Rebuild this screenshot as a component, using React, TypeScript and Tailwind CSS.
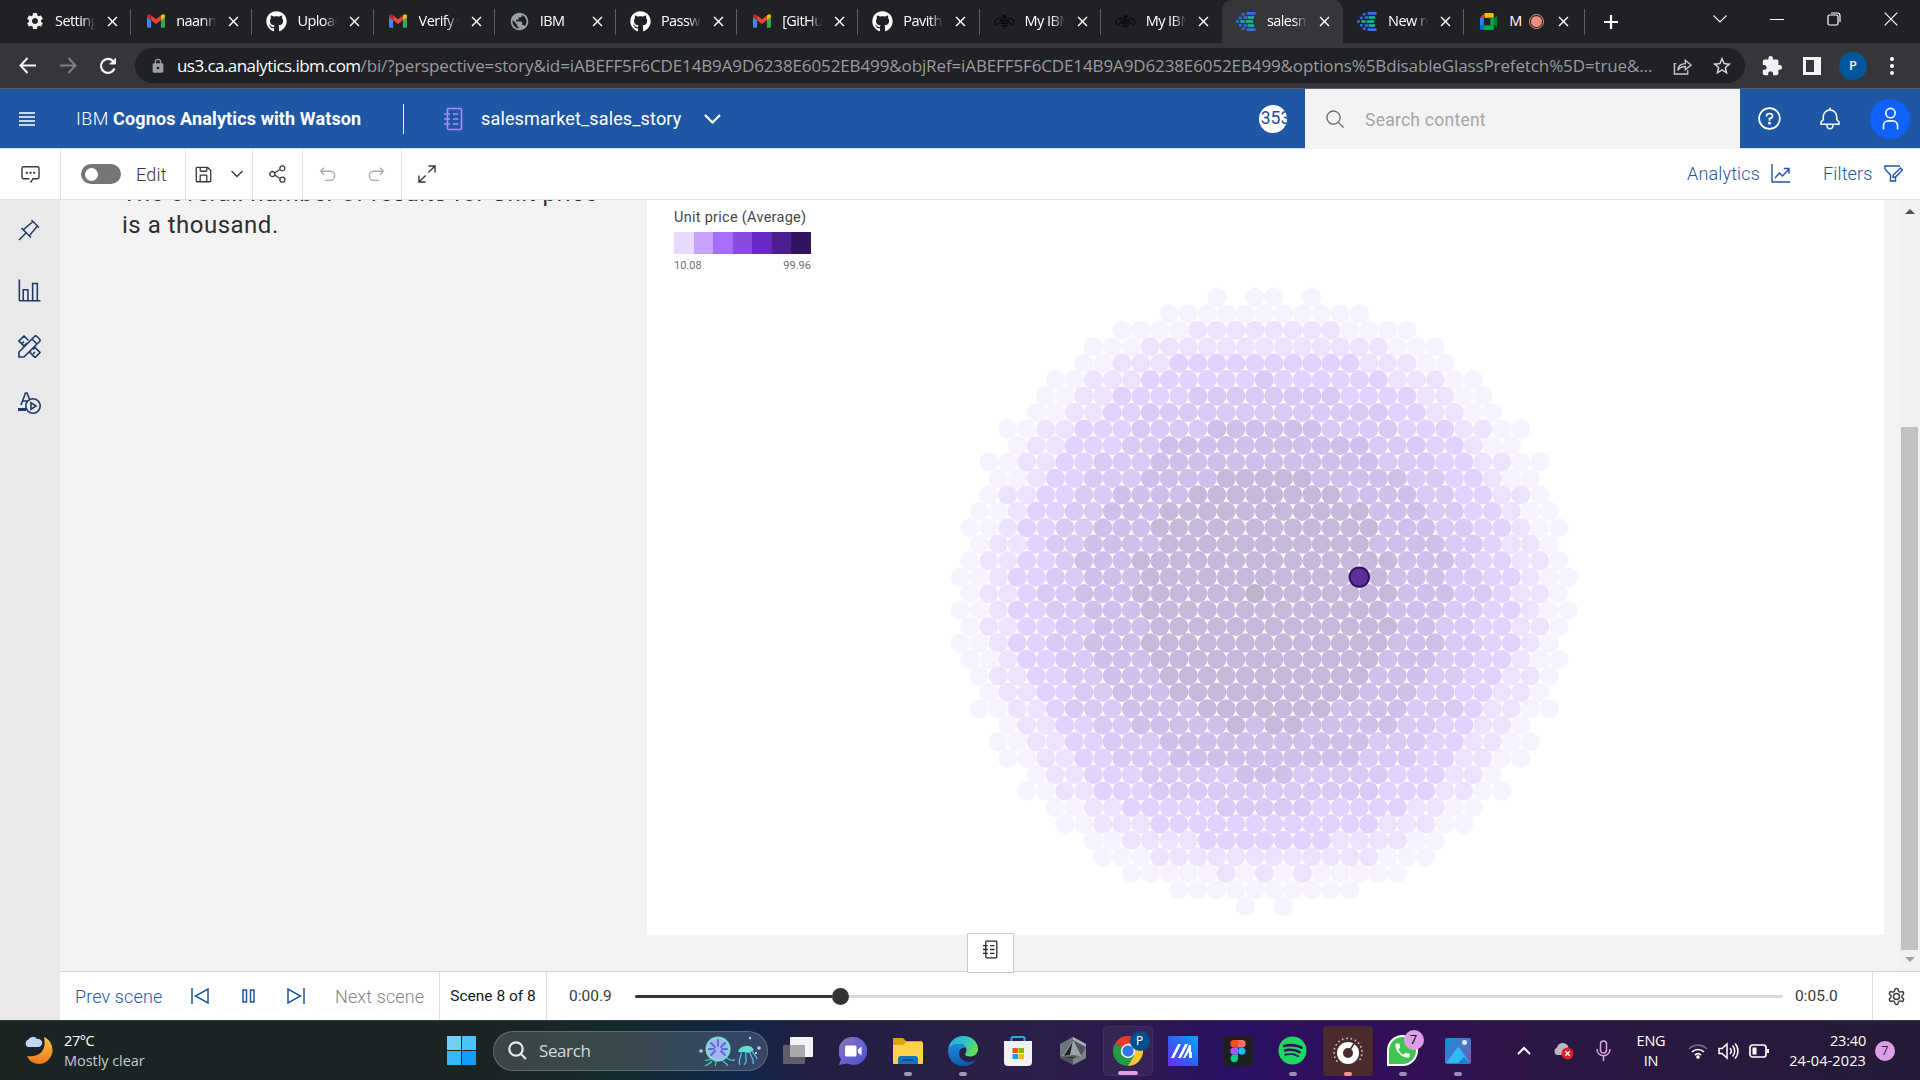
import React from "react";
import { FaGithub, FaSpotify } from "react-icons/fa6";
import { MdExtension, MdLock, MdPublic, MdSettings, MdStarBorder, MdClose } from "react-icons/md";

/* ---------- shared glyphs ---------- */

type IconProps = { className?: string };

const Glyph = ({ d, className }: { d: string; className: string }) => (
  <svg viewBox="0 0 32 32" className={className} fill="currentColor">
    <path d={d} />
  </svg>
);

const Line = ({
  className,
  children,
  box = "0 0 24 24",
  width = 1.5,
}: {
  className: string;
  children: React.ReactNode;
  box?: string;
  width?: number;
}) => (
  <svg viewBox={box} className={className} fill="none" stroke="currentColor" strokeWidth={width}>
    {children}
  </svg>
);

const PIN =
  "M28.5858,13.3137,30,11.9,20,2,18.6858,3.415l1.1858,1.1857L8.38,14.3225,6.6641,12.6067,5.25,14l5.6572,5.6773L2,28.5831,3.41,30l8.9111-8.9087L18,26.7482l1.3929-1.414L17.6765,23.618l9.724-11.4895ZM16.2624,22.2032,9.7966,15.7386,21.2907,6.0143,25.9859,10.71Z";
const BARS = "M27,28V6H19V28H15V14H7V28H4V2H2V28a2,2,0,0,0,2,2H30V28ZM13,28H9V16h4Zm12,0H21V8h4Z";
const SAVE =
  "M27.71,9.29l-5-5A1,1,0,0,0,22,4H6A2,2,0,0,0,4,6V26a2,2,0,0,0,2,2H26a2,2,0,0,0,2-2V10A1,1,0,0,0,27.71,9.29ZM12,6h8v4H12Zm8,20H12V18h8Zm2,0V18a2,2,0,0,0-2-2H12a2,2,0,0,0-2,2v8H6V6h4v4a2,2,0,0,0,2,2h8a2,2,0,0,0,2-2V6.41l4,4V26Z";
const SHARE =
  "M23,20a5,5,0,0,0-3.89,1.89L11.8,17.32a4.46,4.46,0,0,0,0-2.64l7.31-4.57A5,5,0,1,0,18,7a4.79,4.79,0,0,0,.2,1.32l-7.31,4.57a5,5,0,1,0,0,6.22l7.31,4.57A4.79,4.79,0,0,0,18,25a5,5,0,1,0,5-5ZM23,4a3,3,0,1,1-3,3A3,3,0,0,1,23,4ZM7,19a3,3,0,1,1,3-3A3,3,0,0,1,7,19Zm16,9a3,3,0,1,1,3-3A3,3,0,0,1,23,28Z";
const UNDO =
  "M20,10H7.8149l3.5874-3.5859L10,5,4,11,10,17l1.4023-1.4146L7.8179,12H20a6,6,0,0,1,0,12H12v2h8a8,8,0,0,0,0-16Z";
const BELL =
  "M28.7071,19.293,26,16.5859V13a10.0136,10.0136,0,0,0-9-9.9492V1H15V3.0508A10.0136,10.0136,0,0,0,6,13v3.5859L3.2929,19.293A1,1,0,0,0,3,20v3a1,1,0,0,0,1,1h7v.7768a5.152,5.152,0,0,0,4.5,5.1987A5.0057,5.0057,0,0,0,21,25V24h7a1,1,0,0,0,1-1V20A1,1,0,0,0,28.7071,19.293ZM19,25a3,3,0,0,1-6,0V24h6Zm8-3H5V20.4141L7.707,17.707A1,1,0,0,0,8,17V13a8,8,0,0,1,16,0v4a1,1,0,0,0,.293.707L27,20.4141Z";
const SEARCH =
  "M29,27.5859l-7.5521-7.5521a11.0177,11.0177,0,1,0-1.4141,1.4141L27.5859,29ZM4,13a9,9,0,1,1,9,9A9.01,9.01,0,0,1,4,13Z";
const USER =
  "M16,4a5,5,0,1,1-5,5,5,5,0,0,1,5-5m0-2a7,7,0,1,0,7,7A7,7,0,0,0,16,2Z M26,30H24V25a5,5,0,0,0-5-5H13a5,5,0,0,0-5,5v5H6V25a7,7,0,0,1,7-7h6a7,7,0,0,1,7,7Z";

const Notebook = ({ className }: IconProps) => (
  <Line className={className ?? ""} box="0 0 19 24" width={1.6}>
    <rect x="3.5" y="1.5" width="14" height="21" rx="1" />
    <path d="M0 7h6M0 12h6M0 17h6M9 7h5.500M9 12h5.500M9 17h5.500" />
  </Line>
);

/* ---------- browser tabs ---------- */

const Gmail = () => (
  <svg viewBox="0 0 24 18" className="h-[14px] w-[18px]">
    <path d="M0 3v13.500A1.500 1.500 0 0 0 1.500 18H5.500V8Z" fill="#4285f4" />
    <path d="M24 3v13.500a1.500 1.500 0 0 1-1.500 1.500H18.500V8Z" fill="#34a853" />
    <path d="M18.500 1.800V8L24 4V2.200C24 0 21.500-.8 19.800.6Z" fill="#fbbc04" />
    <path d="M5.500 8V1.800L12 6.600l6.500-4.800V8L12 13Z" fill="#ea4335" />
    <path d="M0 2.200V4l5.500 4V1.800L4.200.6C2.500-.8 0 0 0 2.200Z" fill="#c5221f" />
  </svg>
);

const Bee = () => (
  <svg viewBox="0 0 24 18" className="h-[15px] w-[21px]" fill="#0b0b0c">
    <circle cx="12" cy="3.500" r="2.500" />
    <path d="M8 7h8v2H8zM7.500 10h9v2h-9zM8 13h8v2H8zM10.500 15.500h3l-1.500 2.500z" />
    <path d="M8 6C3 3-.5 9 1 11.500S7 11 8 6ZM16 6c5-3 8.500 3 7 5.500S17 11 16 6Z" fill="none" stroke="#0b0b0c" strokeWidth="1.500" />
    <path d="M9 1 7.500 0M15 1l1.500-1" stroke="#0b0b0c" />
  </svg>
);

const CognosMark = () => (
  <svg viewBox="0 0 22 20" className="h-[19px] w-[21px]">
    <g fill="#2f6fe8">
      <path d="M11 0h9.500v3H11zM6 1h3v2.600H6zM8 4.400h4v2.600H8zM0 8.600h3v2.600H0zM3 5h3v2.600H3zM3 12.600h3v2.600H3zM8 13h4v2.600H8zM11 17h9.500v3H11zM6 16.400h3V19H6z" />
    </g>
    <g fill="#0cbfa0">
      <path d="M12.500 4.400H19v2.600h-6.500zM4.500 8.600H9v2.600H4.500zM10 8.600h8v2.600h-8zM12.500 13H19v2.600h-6.500z" />
    </g>
  </svg>
);

const Meet = () => (
  <svg viewBox="0 0 20 20" className="size-[19px]">
    <path d="M1 6 6 1v5Z" fill="#ea4335" />
    <path d="M6 1h8a1.500 1.500 0 0 1 1.500 1.500V6H6Z" fill="#fbbc04" />
    <path d="M1 6h4v8H1Z" fill="#2684fc" />
    <path d="M1 14h4v5H2.500A1.500 1.500 0 0 1 1 17.500Z" fill="#0066da" />
    <path d="M5 14h10.500v3.500A1.500 1.500 0 0 1 14 19H5Z" fill="#00ac47" />
    <path d="M12 10l7-6v12Z" fill="#00832d" />
    <path d="M12 6h3.500v8H12Z" fill="#00ac47" />
  </svg>
);

const tabs: { icon: React.ReactNode; label: string; active?: boolean; noLine?: boolean; rec?: boolean }[] = [
  { icon: <MdSettings className="size-[20px] text-[#f1f1f1]" />, label: "Settings" },
  { icon: <Gmail />, label: "naanmu" },
  { icon: <FaGithub className="size-[21px] text-white" />, label: "Upload" },
  { icon: <Gmail />, label: "Verify y" },
  { icon: <MdPublic className="size-[21px] text-[#9aa0a6]" />, label: "IBM" },
  { icon: <FaGithub className="size-[21px] text-white" />, label: "Passwo" },
  { icon: <Gmail />, label: "[GitHub" },
  { icon: <FaGithub className="size-[21px] text-white" />, label: "Pavithr" },
  { icon: <Bee />, label: "My IBM" },
  { icon: <Bee />, label: "My IBM", noLine: true },
  { icon: <CognosMark />, label: "salesma", active: true, noLine: true },
  { icon: <CognosMark />, label: "New re" },
  { icon: <Meet />, label: "M", rec: true },
];

const TabStrip = () => (
  <div className="flex h-[43px] items-stretch bg-[#202124] pl-[10px] font-['Open_Sans',sans-serif] text-[14.500px] text-white">
    {tabs.map((t, i) => (
      <div
        key={i}
        className={
          "relative flex w-[121.200px] shrink-0 items-center pb-[1px] " +
          (t.active ? "rounded-t-[10px] bg-[#35363a]" : "")
        }
      >
        <div className="flex w-[45px] justify-center pl-[4px]">{t.icon}</div>
        <div
          className={
            "overflow-hidden whitespace-nowrap " +
            (t.rec
              ? "w-[17px]"
              : "w-[41px] tracking-[-0.550px] [mask-image:linear-gradient(to_right,black_65%,transparent_98%)]")
          }
        >
          {t.label}
        </div>
        {t.rec && (
          <div className="ml-[3px] flex size-[15px] items-center justify-center rounded-full border border-[#f28b82]">
            <div className="size-[11px] rounded-full bg-[#f28b82]" />
          </div>
        )}
        <MdClose className={"size-[17px] " + (t.rec ? "ml-[11px]" : "ml-[8px]")} />
        {!t.noLine && <div className="absolute top-[9px] right-0 h-[26px] w-px bg-[#5b5d60]" />}
      </div>
    ))}
    <div className="flex w-[52px] items-center justify-center">
      <Line className="size-[16px]" box="0 0 16 16" width={2.2}>
        <path d="M8 1v14M1 8h14" />
      </Line>
    </div>
    <div className="ml-auto flex items-center pr-[1px] pb-[5px]">
      <div className="flex w-[57px] justify-center">
        <Line className="h-[8px] w-[14px]" box="0 0 14 8" width={1.1}>
          <path d="m.5.5 6.500 6.500 6.500-6.500" />
        </Line>
      </div>
      <div className="flex w-[57px] justify-center">
        <div className="h-px w-[14px] bg-white" />
      </div>
      <div className="flex w-[57px] justify-center">
        <Line className="size-[14px]" box="0 0 14 14" width={1.2}>
          <rect x="1" y="3" width="10" height="10" rx="1.500" />
          <path d="M4 1h6.500A2.500 2.500 0 0 1 13 3.500V10" />
        </Line>
      </div>
      <div className="flex w-[57px] justify-center">
        <Line className="size-[14px]" box="0 0 14 14" width={1.2}>
          <path d="m.7.700 12.600 12.600M13.300.7.700 13.300" />
        </Line>
      </div>
    </div>
  </div>
);

const AddressBar = () => (
  <div className="flex h-[46px] items-center border-b border-[#5e5f61] bg-[#35363a] text-[#f1f3f4]">
    <div className="flex w-[48px] justify-center pl-[6px]">
      <Line className="size-[17px]" box="0 0 17 17" width={2}>
        <path d="M8.500 1 1.500 8.500l7 7.500M1.500 8.500H17" />
      </Line>
    </div>
    <div className="flex w-[40px] justify-center text-[#7d7e81]">
      <Line className="size-[17px]" box="0 0 17 17" width={2}>
        <path d="m8.500 1 7 7.500-7 7.500M15.500 8.500H0" />
      </Line>
    </div>
    <div className="flex w-[40px] justify-center">
      <Line className="size-[18px]" box="0 0 18 18" width={2.2}>
        <path d="M15.500 11.500A7 7 0 1 1 14 4l2 2" />
        <path d="M16.500 1v6h-6" fill="currentColor" strokeWidth="1" />
      </Line>
    </div>
    <div className="ml-[7px] flex h-[35px] w-[1610px] items-center rounded-full bg-[#202124]">
      <MdLock className="ml-[15px] size-[16px] text-[#9aa0a6]" />
      <div className="ml-[11px] w-[1482px] overflow-hidden font-['Open_Sans',sans-serif] text-[17px] whitespace-nowrap text-[#999b9e]">
        <span className="tracking-[-0.560px] text-white">us3.ca.analytics.ibm.com</span>
        <span className="tracking-[-0.120px]">
          /bi/?perspective=story&amp;id=iABEFF5F6CDE14B9A9D6238E6052EB499&amp;objRef=iABEFF5F6CDE14B9A9D6238E6052EB499&amp;options%5BdisableGlassPrefetch%5D=true&amp;...
        </span>
      </div>
      <Line className="ml-[14px] size-[19px] text-[#c4c7c5]" box="0 0 20 20" width={1.500}>
        <path d="M3.500 8H1.500v11h14v-4M5 15c.5-5 3-7 8-7V4.500l6 5-6 5V11c-4 0-6 1-8 4Z" />
      </Line>
      <MdStarBorder className="ml-[19px] size-[22px] text-[#d5d7d9]" />
    </div>
    <MdExtension className="ml-[16px] size-[22px]" />
    <div className="ml-[20px] h-[18px] w-[18px] border-[3px] border-r-[7px] border-[#f1f3f4]" />
    <div className="ml-[18px] flex size-[28px] items-center justify-center rounded-full bg-[#00579b] font-['Open_Sans',sans-serif] text-[13px] font-semibold">
      P
    </div>
    <div className="ml-[23px] flex flex-col gap-[3px]">
      <div className="size-[4px] rounded-full bg-white" />
      <div className="size-[4px] rounded-full bg-white" />
      <div className="size-[4px] rounded-full bg-white" />
    </div>
  </div>
);

/* ---------- application header ---------- */

const AppHeader = () => (
  <header className="flex h-[60px] items-center border-b border-[#d5e0ee] bg-[#1f57a4] text-white">
    <Line className="ml-[19px] h-[14px] w-[16px]" box="0 0 16 14" width={1.3}>
      <path d="M0 1h16M0 5h16M0 9h16M0 13h16" />
    </Line>
    <div className="ml-[41px] w-[286px] text-[18px] whitespace-nowrap">
      <span className="font-light tracking-[0.400px]">IBM</span>{" "}
      <span className="font-bold tracking-[0.120px]">Cognos Analytics with Watson</span>
    </div>
    <div className="ml-[41px] h-[30px] w-px bg-[#e8eef6]" />
    <Notebook className="ml-[40px] h-[24px] w-[19px] text-[#a98bff]" />
    <div className="ml-[18px] w-[200px] text-[18px] tracking-[0.150px] whitespace-nowrap">salesmarket_sales_story</div>
    <Line className="ml-[23px] h-[10px] w-[17px]" box="0 0 17 10" width={2.2}>
      <path d="m1 1 7.500 7.500L16 1" />
    </Line>
    <div className="ml-auto flex items-center self-stretch">
      <div className="flex size-[28px] items-center justify-center overflow-hidden rounded-full bg-white text-[17.500px] text-[#1f4f9a]">
        <span className="ml-[5px]">353</span>
      </div>
      <div className="ml-[18px] flex h-[60px] w-[435px] items-center self-start bg-[#f3f3f3] pl-[20px]">
        <Glyph d={SEARCH} className="size-[21px] text-[#6f6f6f]" />
        <span className="mt-[2px] ml-[19px] text-[17.500px] tracking-[0.250px] text-[#a5a5a5]">Search content</span>
      </div>
      <div className="flex w-[60px] justify-center pr-[2px]">
        <Line className="size-[23px]" box="0 0 23 23" width={1.7}>
          <circle cx="11.500" cy="11.500" r="10.400" />
          <path d="M8.500 9.500V9c0-1.700 1.200-2.500 3-2.500s3 1 3 2.500-1.300 2.400-3 2.600v2.200" />
          <circle cx="11.500" cy="16.300" r=".6" fill="currentColor" />
        </Line>
      </div>
      <div className="flex w-[60px] justify-center">
        <Glyph d={BELL} className="size-[24px]" />
      </div>
      <div className="mr-[10px] ml-[10px] flex size-[40px] items-center justify-center rounded-full bg-[#0f62fe]">
        <Glyph d={USER} className="size-[25px]" />
      </div>
    </div>
  </header>
);

const ToolBar = () => (
  <div className="flex h-[51px] items-stretch border-b border-[#e4e4e4] bg-white text-[#393939]">
    <div className="flex w-[61px] items-center justify-center border-r border-[#e4e4e4]">
      <Line className="size-[19px]" box="0 0 19 19" width={1.4}>
        <path d="M9.500 17.500 12 13.800h4.500A1.500 1.500 0 0 0 18 12.300V3.200a1.500 1.500 0 0 0-1.500-1.500h-14A1.500 1.500 0 0 0 1 3.200v9.100a1.500 1.500 0 0 0 1.500 1.500H8.500" />
        <path d="M4.800 7.800h2M8.500 7.800h2M12.200 7.800h2" strokeWidth="2" />
      </Line>
    </div>
    <div className="flex w-[125px] items-center border-r border-[#e4e4e4] pl-[20px]">
      <div className="flex h-[20px] w-[40px] items-center rounded-full bg-[#757575] pl-[4px]">
        <div className="size-[13px] rounded-full bg-white" />
      </div>
      <span className="ml-[15px] text-[18px] font-light tracking-[0.200px]">Edit</span>
    </div>
    <div className="flex w-[67px] items-center border-r border-[#e4e4e4] pl-[7px]">
      <Glyph d={SAVE} className="size-[21px]" />
      <Line className="ml-[16px] h-[8px] w-[14px]" box="0 0 13 8" width={1.4}>
        <path d="m1 1 5.500 5.500L12 1" />
      </Line>
    </div>
    <div className="flex w-[50px] items-center justify-center border-r border-[#e4e4e4]">
      <Glyph d={SHARE} className="size-[20px]" />
    </div>
    <div className="flex w-[99px] items-center border-r border-[#e4e4e4] pl-[14px] text-[#a8a8a8]">
      <Glyph d={UNDO} className="size-[21px]" />
      <Glyph d={UNDO} className="ml-[28px] size-[21px] -scale-x-100" />
    </div>
    <div className="flex w-[50px] items-center justify-center">
      <Line className="size-[18px]" box="0 0 19 19" width={1.5}>
        <path d="M11 1h7v7M18 1l-7 7M8 18H1v-7M1 18l7-7" />
      </Line>
    </div>
    <div className="ml-auto flex items-center pr-[17px] pb-[1px] text-[18px] font-light text-[#1f57a4]">
      <span className="w-[73px] tracking-[0.150px]">Analytics</span>
      <Line className="ml-[11px] size-[19px]" box="0 0 19 19" width={1.4}>
        <path d="M1 0v18h18M4 14l4.500-5 3 3L18 5M13 4.500h5v5" />
      </Line>
      <span className="ml-[33px] w-[50px] tracking-[0.150px]">Filters</span>
      <Line className="ml-[11px] size-[19px]" box="0 0 19 19" width={1.4}>
        <path d="M13 2H1v3l5.500 6v6h5v-4.500" />
        <path d="M9 11.500 16.500 4l2 2L11.500 13 9 13.500ZM13 2h3" />
      </Line>
    </div>
  </div>
);

const SideRail = () => (
  <nav className="flex w-[60px] shrink-0 flex-col items-center bg-[#e9e9e9] pt-[18px] pr-[2px] text-[#1f3a69]">
    <Glyph d={PIN} className="size-[24px]" />
    <Glyph d={BARS} className="mt-[36px] size-[25px]" />
    <Line className="mt-[32px] size-[23px]" box="0 0 23 23" width={1.6}>
      <path d="m1 22v-5L16.500 1.500a1.800 1.800 0 0 1 2.500 0L21.500 4a1.800 1.800 0 0 1 0 2.500L6 22ZM14 4l5 5" />
      <path d="m9 8-3 3-5-5L6 1l4.500 4.500M4 8.500 6 6.500M15 14.500l2-2 5 5-5 5-5-5 1-1M15 19l2-2" />
    </Line>
    <Line className="mt-[33px] size-[23px]" box="0 0 23 23" width={1.6}>
      <path d="m3 14 4.500-12h1.500l2.500 6M5 10h4" />
      <path d="M0 18.500h8" strokeWidth="3" />
      <circle cx="15" cy="15" r="7.200" />
      <path d="M13 11.800v6.400l5-3.200Z" />
    </Line>
  </nav>
);

/* ---------- honeycomb chart ---------- */

const PITCH = 19;
const ORIGIN_X = 1254.8 - 647;
const ORIGIN_Y = 297.4 - 200;
const shades = ["#f6f2ff", "#ede3ff", "#e3d2ff", "#dac9f5", "#d0beeb", "#c7b9dc", "#beb4c8"];

/* Every row lists [half-column, shade] pairs where a run begins; the last number is the final half-column. */
const rows: { runs: [number, number][]; end: number }[] = [
  { runs: [[-4, 0], [-2, -1], [0, 0], [4, -1], [6, 0]], end: 6 },
  { runs: [[-9, 0]], end: 11 },
  { runs: [[-14, 0], [-6, 1], [10, 0]], end: 16 },
  { runs: [[-17, 0], [-11, 1], [15, 0]], end: 19 },
  { runs: [[-18, 0], [-14, 1], [-8, 2], [12, 1], [18, 0]], end: 20 },
  { runs: [[-21, 0], [-17, 1], [-11, 2], [1, 3], [3, 2], [15, 1], [21, 0]], end: 23 },
  { runs: [[-22, 0], [-18, 1], [-14, 2], [-6, 3], [10, 2], [18, 1], [22, 0]], end: 24 },
  { runs: [[-23, 0], [-19, 1], [-15, 2], [-11, 3], [15, 2], [19, 1], [23, 0]], end: 25 },
  { runs: [[-26, 0], [-22, 1], [-18, 2], [-12, 3], [-4, 4], [8, 3], [16, 2], [22, 1], [26, 0]], end: 28 },
  { runs: [[-25, 0], [-23, 1], [-19, 2], [-13, 3], [-9, 4], [13, 3], [19, 2], [23, 1], [25, 0]], end: 27 },
  { runs: [[-28, 0], [-24, 1], [-20, 2], [-16, 3], [-10, 4], [14, 3], [20, 2], [24, 1], [28, 0]], end: 30 },
  { runs: [[-27, 0], [-23, 1], [-21, 2], [-17, 3], [-11, 4], [-3, 5], [7, 4], [17, 3], [21, 2], [25, 1], [27, 0]], end: 29 },
  { runs: [[-28, 0], [-26, 1], [-22, 2], [-18, 3], [-14, 4], [-6, 5], [10, 4], [18, 3], [22, 2], [26, 1], [30, 0]], end: 30 },
  { runs: [[-29, 0], [-25, 1], [-23, 2], [-19, 3], [-15, 4], [-9, 5], [13, 4], [19, 3], [23, 2], [27, 1], [29, 0]], end: 31 },
  { runs: [[-30, 0], [-26, 1], [-24, 2], [-20, 3], [-16, 4], [-10, 5], [14, 4], [20, 3], [24, 2], [28, 1], [30, 0]], end: 32 },
  { runs: [[-29, 0], [-27, 1], [-23, 2], [-21, 3], [-17, 4], [-9, 5], [13, 4], [21, 3], [25, 2], [27, 1], [31, 0]], end: 31 },
  { runs: [[-30, 0], [-28, 1], [-24, 2], [-20, 3], [-18, 4], [-12, 5], [16, 4], [22, 3], [24, 2], [28, 1], [32, 0]], end: 32 },
  { runs: [[-31, 0], [-27, 1], [-25, 2], [-21, 3], [-17, 4], [-11, 5], [15, 4], [21, 3], [25, 2], [29, 1], [31, 0]], end: 33 },
  { runs: [[-30, 0], [-28, 1], [-24, 2], [-22, 3], [-18, 4], [-12, 5], [0, 6], [2, 5], [16, 4], [22, 3], [26, 2], [28, 1], [32, 0]], end: 32 },
  { runs: [[-31, 0], [-27, 1], [-25, 2], [-21, 3], [-17, 4], [-11, 5], [15, 4], [21, 3], [25, 2], [29, 1], [31, 0]], end: 33 },
  { runs: [[-30, 0], [-28, 1], [-24, 2], [-20, 3], [-16, 4], [-10, 5], [16, 4], [20, 3], [24, 2], [28, 1], [32, 0]], end: 32 },
  { runs: [[-31, 0], [-27, 1], [-25, 2], [-21, 3], [-17, 4], [-11, 5], [15, 4], [21, 3], [25, 2], [29, 1], [31, 0]], end: 31 },
  { runs: [[-30, 0], [-26, 1], [-24, 2], [-20, 3], [-16, 4], [-10, 5], [14, 4], [20, 3], [24, 2], [28, 1], [30, 0]], end: 32 },
  { runs: [[-29, 0], [-27, 1], [-23, 2], [-19, 3], [-15, 4], [-9, 5], [13, 4], [19, 3], [23, 2], [27, 1], [31, 0]], end: 31 },
  { runs: [[-28, 0], [-26, 1], [-22, 2], [-18, 3], [-14, 4], [-8, 5], [12, 4], [18, 3], [22, 2], [26, 1], [30, 0]], end: 30 },
  { runs: [[-29, 0], [-25, 1], [-21, 2], [-19, 3], [-13, 4], [-5, 5], [9, 4], [17, 3], [23, 2], [25, 1], [29, 0]], end: 31 },
  { runs: [[-26, 0], [-24, 1], [-20, 2], [-16, 3], [-12, 4], [-2, 5], [0, 4], [2, 5], [6, 4], [16, 3], [20, 2], [24, 1], [28, 0]], end: 28 },
  { runs: [[-27, 0], [-23, 1], [-19, 2], [-15, 3], [-9, 4], [13, 3], [19, 2], [23, 1], [27, 0]], end: 29 },
  { runs: [[-26, 0], [-22, 1], [-18, 2], [-14, 3], [-8, 4], [12, 3], [18, 2], [22, 1], [26, 0]], end: 28 },
  { runs: [[-23, 0], [-21, 1], [-17, 2], [-11, 3], [-1, 4], [5, 3], [15, 2], [21, 1], [25, 0]], end: 25 },
  { runs: [[-24, 0], [-20, 1], [-16, 2], [-10, 3], [14, 2], [20, 1], [24, 0]], end: 26 },
  { runs: [[-21, 0], [-17, 1], [-13, 2], [-3, 3], [7, 2], [17, 1], [21, 0]], end: 23 },
  { runs: [[-20, 0], [-16, 1], [-10, 2], [14, 1], [20, 0]], end: 22 },
  { runs: [[-17, 0], [-13, 1], [-5, 2], [9, 1], [17, 0]], end: 19 },
  { runs: [[-16, 0], [-10, 1], [14, 0]], end: 18 },
  { runs: [[-13, 0], [-3, 1], [-1, 0], [1, 1], [3, 0], [5, 1], [7, 0]], end: 15 },
  { runs: [[-8, 0]], end: 10 },
  { runs: [[-1, 0], [1, -1], [3, 0]], end: 3 },
];

const dots = rows.flatMap(({ runs, end }, row) => {
  const out: { x: number; y: number; fill: string }[] = [];
  runs.forEach(([from, shade], i) => {
    if (shade < 0) return;
    const to = i + 1 < runs.length ? runs[i + 1][0] - 2 : end;
    for (let u = from; u <= to; u += 2) {
      out.push({ x: ORIGIN_X + (u * PITCH) / 2, y: ORIGIN_Y + row * 16.454, fill: shades[shade] });
    }
  });
  return out;
});

const PackedChart = () => (
  <svg width="1237" height="735" viewBox="0 0 1237 735" className="absolute inset-0">
    {dots.map((d, i) => (
      <circle key={i} cx={d.x} cy={d.y} r="9.600" fill={d.fill} />
    ))}
    <circle cx={ORIGIN_X + 11 * 9.5} cy={ORIGIN_Y + 17 * 16.454} r="9.700" fill="#5d2f9b" stroke="#31135e" strokeWidth="2" />
  </svg>
);

const Legend = () => (
  <div className="relative pt-[7px] pl-[27px]">
    <div className="text-[14.500px] leading-[22px] tracking-[0.280px] text-[#474747]">Unit price (Average)</div>
    <div className="mt-[3px] flex h-[22px] w-[137px]">
      <div className="flex-1 bg-[#e8daff]" />
      <div className="flex-1 bg-[#c5a3ff]" />
      <div className="flex-1 bg-[#a56eff]" />
      <div className="flex-1 bg-[#8a4be0]" />
      <div className="flex-1 bg-[#6929c4]" />
      <div className="flex-1 bg-[#4b1d8f]" />
      <div className="flex-1 bg-[#31135e]" />
    </div>
    <div className="mt-[5px] flex w-[137px] justify-between text-[11px] leading-[14px] text-[#6f6f6f]">
      <span>10.08</span>
      <span>99.96</span>
    </div>
  </div>
);

const Story = () => (
  <main className="relative flex h-[771px] bg-[#f3f3f3]">
    <div className="w-[587px] overflow-hidden pl-[62px]">
      <p className="mt-[-23px] text-[24px] leading-[32px] tracking-[0.500px] whitespace-nowrap text-[#2e2e2e]">
        The overall number of results for Unit price
        <br />
        is a thousand.
      </p>
    </div>
    <div className="relative h-[735px] w-[1237px] bg-white">
      <PackedChart />
      <Legend />
    </div>
    <div className="ml-auto flex w-[21px] flex-col items-center bg-[#f1f1f1]">
      <div className="mt-[9px] border-x-[5px] border-b-[5px] border-x-transparent border-b-[#505050]" />
      <div className="mt-[213px] h-[523px] w-[17px] bg-[#c1c1c1]" />
      <div className="mt-[7px] border-x-[5px] border-t-[5px] border-x-transparent border-t-[#a0a0a0]" />
    </div>
    <div className="absolute top-[733px] left-[907px] z-10 flex h-[40px] w-[47px] justify-center border border-[#c9c9c9] bg-white pt-[6px]">
      <Notebook className="h-[19px] w-[15px] text-[#262626]" />
    </div>
  </main>
);

const Player = () => (
  <div className="flex h-[49px] items-stretch border-t border-[#d4d4d4] bg-white text-[18px] font-light whitespace-nowrap text-[#1f57a4]">
    <div className="flex w-[380px] items-center border-r border-[#dcdcdc] pl-[15px]">
      <span className="w-[88px] tracking-[0.120px]">Prev scene</span>
      <Line className="ml-[28px] h-[16px] w-[18px]" box="0 0 18 16" width={1.5}>
        <path d="M1 0v16M17 1v14L4.500 8Z" />
      </Line>
      <Line className="ml-[33px] h-[14px] w-[13px]" box="0 0 13 14" width={1.5}>
        <path d="M1 1h3.500v12H1zM8.500 1H12v12H8.500z" />
      </Line>
      <Line className="ml-[32px] h-[16px] w-[18px]" box="0 0 18 16" width={1.5}>
        <path d="M17 0v16M1 1v14L13.500 8Z" />
      </Line>
      <span className="ml-[30px] tracking-[0.120px] text-[#858585]">Next scene</span>
    </div>
    <div className="flex w-[107px] items-center justify-center border-r border-[#dcdcdc] pt-[2px] text-[15.500px] font-normal text-[#161616]">
      Scene 8 of 8
    </div>
    <div className="flex flex-1 items-center text-[15.500px] text-[#393939]">
      <span className="mt-[2px] ml-[22px] w-[44px] font-normal">0:00.9</span>
      <div className="ml-[22px] flex h-[17px] w-[1148px] items-center">
        <div className="h-[3px] w-[197px] rounded-l bg-[#333]" />
        <div className="size-[17px] rounded-full bg-[#333]" />
        <div className="h-[3px] flex-1 rounded-r bg-[#dadada]" />
      </div>
      <span className="mt-[2px] ml-[12px] font-normal">0:05.0</span>
    </div>
    <div className="flex w-[48px] items-center justify-center border-l border-[#dcdcdc] pr-[1px] text-[#393939]">
      <Line className="size-[19px]" width={1.8}>
        <path d="M12.220 2h-.44a2 2 0 0 0-2 2v.18a2 2 0 0 1-1 1.730l-.43.25a2 2 0 0 1-2 0l-.15-.08a2 2 0 0 0-2.730.73l-.22.38a2 2 0 0 0 .73 2.730l.15.1a2 2 0 0 1 1 1.720v.51a2 2 0 0 1-1 1.740l-.15.09a2 2 0 0 0-.73 2.730l.22.38a2 2 0 0 0 2.730.73l.15-.08a2 2 0 0 1 2 0l.43.25a2 2 0 0 1 1 1.730V20a2 2 0 0 0 2 2h.44a2 2 0 0 0 2-2v-.18a2 2 0 0 1 1-1.730l.43-.25a2 2 0 0 1 2 0l.15.08a2 2 0 0 0 2.730-.73l.22-.39a2 2 0 0 0-.73-2.730l-.15-.08a2 2 0 0 1-1-1.740v-.5a2 2 0 0 1 1-1.740l.15-.09a2 2 0 0 0 .73-2.730l-.22-.38a2 2 0 0 0-2.730-.73l-.15.08a2 2 0 0 1-2 0l-.43-.25a2 2 0 0 1-1-1.730V4a2 2 0 0 0-2-2z" />
        <circle cx="12" cy="12" r="3.800" />
      </Line>
    </div>
  </div>
);

/* ---------- taskbar ---------- */

const TaskView = () => (
  <svg viewBox="0 0 30 28" className="h-[28px] w-[30px]">
    <rect x="0" y="8" width="22" height="19" rx="1" fill="#605e66" />
    <rect x="7" y="0" width="23" height="20" rx="1" fill="#f4f4f5" />
    <path d="M7 8h15v12H7z" fill="#a9a8ac" />
  </svg>
);
const Chat = () => (
  <svg viewBox="0 0 28 28" className="size-[28px]">
    <defs>
      <linearGradient id="chat" x1="0" y1="0" x2="1" y2="1">
        <stop offset="0" stopColor="#8f74a8" />
        <stop offset=".5" stopColor="#6a63d2" />
        <stop offset="1" stopColor="#4a50c4" />
      </linearGradient>
    </defs>
    <path d="M14 0a14 14 0 1 1-6 26.500L0 28l2-6A14 14 0 0 1 14 0Z" fill="url(#chat)" />
    <rect x="6" y="8.500" width="11.500" height="11" rx="1.500" fill="#fff" />
    <path d="m19 12.500 3.500-3v9l-3.500-3Z" fill="#fff" />
  </svg>
);
const Folder = () => (
  <svg viewBox="0 0 30 28" className="h-[28px] w-[30px]">
    <path d="M0 2a1 1 0 0 1 1-1h9l3 3h16v6H0Z" fill="#e0a10e" />
    <path d="M0 8h10l3-3h16a1 1 0 0 1 1 1v20a1 1 0 0 1-1 1H1a1 1 0 0 1-1-1Z" fill="#ffd04c" />
    <path d="M5 27v-5a3 3 0 0 1 3-3h14a3 3 0 0 1 3 3v5Z" fill="#1172bd" />
    <path d="M9 23h12" stroke="#0a4a82" strokeWidth="1.500" />
  </svg>
);
const Edge = () => (
  <svg viewBox="0 0 30 30" className="size-[30px]">
    <defs>
      <linearGradient id="edgeTop" x1="0" y1="0" x2="1" y2=".4">
        <stop offset="0" stopColor="#2aa6e8" />
        <stop offset=".6" stopColor="#2cc6c8" />
        <stop offset="1" stopColor="#62dd54" />
      </linearGradient>
      <linearGradient id="edgeLow" x1="0" y1="0" x2="0" y2="1">
        <stop offset="0" stopColor="#1b8fdc" />
        <stop offset="1" stopColor="#0c57ad" />
      </linearGradient>
    </defs>
    <path d="M0 14C1 5 8 0 15 0c9 0 15 6 15 13 0 5-4 7.500-8 7.500-3 0-5-1-5-2 0-.8 1.500-1.500 1.500-4.500S15.500 8 11 8C6 8 1.500 10.500 0 14Z" fill="url(#edgeTop)" />
    <path d="M0 14c1.500-3.500 6-6 11-6 3 0 6 1.500 7 4-3-1-7 1-7 5.500 0 5 5 8.500 10 8.500 3 0 5-1 7-2-3 4-7.500 6-13 6C6.500 30 0 24 0 14Z" fill="url(#edgeLow)" />
  </svg>
);
const Store = () => (
  <svg viewBox="0 0 30 30" className="size-[30px]">
    <path d="M8.500 6V2.500A1.500 1.500 0 0 1 10 1h10a1.500 1.500 0 0 1 1.500 1.500V6" fill="none" stroke="#2ba6ec" strokeWidth="2" />
    <path d="M1 5h28v21a4 4 0 0 1-4 4H5a4 4 0 0 1-4-4Z" fill="#f1f1f2" />
    <path d="M9.500 12H15v5H9.500z" fill="#f25022" />
    <path d="M15.500 12H21v5h-5.500z" fill="#7fba00" />
    <path d="M9.500 18H15v5H9.500z" fill="#00a4ef" />
    <path d="M15.500 18H21v5h-5.500z" fill="#ffb900" />
  </svg>
);
const Armoury = () => (
  <svg viewBox="0 0 28 28" className="size-[28px]">
    <path d="m14 0 13 7v14l-13 7-13-7V7Z" fill="#4d555c" />
    <path d="m14 0 13 7v3L14 3Z" fill="#aab1b6" />
    <path d="M1 7 14 0v3L5 20l-4-1Z" fill="#6d767d" />
    <path d="M14 3 4 20l9 1 8-3Z" fill="#20242a" />
    <path d="M14 3 11 18l-7 2 10-2 8 1Z" fill="#9ba3a9" />
    <path d="m14 28 13-7V10l-5 9-8 3Z" fill="#7b848b" />
    <path d="M14 4 22 19H4Z" fill="none" stroke="#a7aeb3" strokeWidth=".8" />
  </svg>
);
const Chrome = () => (
  <svg viewBox="0 0 30 30" className="size-[30px]">
    <path d="M15 15 2 7.500A15 15 0 0 1 28 7.500Z" fill="#e8392c" />
    <path d="M15 15 2 7.500A15 15 0 0 0 15 30l7-11Z" fill="#249a45" />
    <path d="M15 15l6.500 4L15 30A15 15 0 0 0 28 7.500H15Z" fill="#fcc52c" />
    <circle cx="15" cy="15" r="7.200" fill="#fff" />
    <circle cx="15" cy="15" r="5.700" fill="#2f76ea" />
  </svg>
);
const MyAsus = () => (
  <svg viewBox="0 0 30 30" className="size-[30px]">
    <defs>
      <linearGradient id="asus" x1="0" y1="1" x2="1" y2="0">
        <stop offset="0" stopColor="#6a2cff" />
        <stop offset=".5" stopColor="#2b63f2" />
        <stop offset="1" stopColor="#12a5ff" />
      </linearGradient>
    </defs>
    <path d="M0 0h30v30H0z" fill="url(#asus)" />
    <path d="m3 22 7-14h3L6 22ZM10 22l7-14h3l-7 14ZM19 14l2-5h2v13h-2v-6l-4 6h-2ZM22.500 16h1.500v6h-1.500z" fill="#fff" />
  </svg>
);
const Figma = () => (
  <svg viewBox="0 0 30 30" className="size-[30px]">
    <rect width="30" height="30" rx="2" fill="#1f1f20" />
    <path d="M15 4h-4a3.700 3.700 0 0 0 0 7.400h4Z" fill="#f24e1e" />
    <path d="M15 4h4a3.700 3.700 0 0 1 0 7.400h-4Z" fill="#ff7262" />
    <path d="M15 11.400h-4a3.700 3.700 0 0 0 0 7.400h4Z" fill="#a259ff" />
    <circle cx="18.800" cy="15.100" r="3.700" fill="#1abcfe" />
    <path d="M15 18.800h-4a3.700 3.700 0 1 0 4 3.700Z" fill="#0acf83" />
  </svg>
);
const Dial = () => (
  <svg viewBox="0 0 32 32" className="size-[32px]">
    <path d="M5 26A14 14 0 1 1 27 26" fill="none" stroke="#c9bebc" strokeWidth="1.800" strokeDasharray=".1 4.200" strokeLinecap="round" />
    <circle cx="16" cy="18" r="8" fill="none" stroke="#fff" strokeWidth="6" />
    <path d="m16 18 7-11" stroke="#4a2628" strokeWidth="1.500" />
  </svg>
);
const WhatsApp = () => (
  <div className="flex size-[31px] items-center justify-center rounded-full rounded-bl-[6px] bg-white">
    <div className="flex size-[27px] items-center justify-center rounded-full rounded-bl-[5px] bg-[#41c352] text-white">
      <svg viewBox="0 0 24 24" className="size-[19px]" fill="currentColor">
        <path d="M6.600 10.800a15 15 0 0 0 6.600 6.600l2.200-2.200c.3-.3.700-.4 1-.2 1.100.4 2.300.6 3.600.6.6 0 1 .4 1 1V20c0 .6-.4 1-1 1A17 17 0 0 1 3 4c0-.6.4-1 1-1h3.500c.6 0 1 .4 1 1 0 1.300.2 2.500.6 3.600.1.3 0 .7-.2 1Z" />
      </svg>
    </div>
  </div>
);
const Photos = () => (
  <svg viewBox="0 0 26 26" className="size-[26px]">
    <defs>
      <linearGradient id="sky" x1="0" y1="0" x2="1" y2="1">
        <stop offset="0" stopColor="#1191dd" />
        <stop offset="1" stopColor="#7b58b0" />
      </linearGradient>
    </defs>
    <rect width="26" height="26" rx="2" fill="url(#sky)" />
    <path d="m1 25 11-15a1.500 1.500 0 0 1 2.500 0L25 25Z" fill="#2dbcf4" />
    <path d="m14 24 5-5 6 6H13Z" fill="#1484d8" />
    <circle cx="19.500" cy="4.500" r="2.500" fill="#e5e9f2" />
  </svg>
);

const apps: { icon: React.ReactNode; mark?: string; cell?: string; badge?: React.ReactNode }[] = [
  { icon: <TaskView /> },
  { icon: <Chat /> },
  { icon: <Folder />, mark: "w-[8px] bg-[#a398ae]" },
  { icon: <Edge />, mark: "w-[8px] bg-[#a398ae]" },
  { icon: <Store /> },
  { icon: <Armoury /> },
  {
    icon: <Chrome />,
    mark: "w-[20px] bg-[#dc9ee4]",
    cell: "rounded-[5px] border border-white/5 bg-white/5",
    badge: (
      <div className="absolute top-[4px] left-[26px] flex size-[20px] items-center justify-center rounded-full bg-[#00508f] text-[12px]">
        P
      </div>
    ),
  },
  { icon: <MyAsus /> },
  { icon: <Figma /> },
  { icon: <FaSpotify className="size-[29px] text-[#1ed760]" />, mark: "w-[8px] bg-[#9d8cb5]" },
  { icon: <Dial />, mark: "w-[8px] bg-[#ff8f92]", cell: "rounded-[4px] bg-[#4a2a2b]" },
  {
    icon: <WhatsApp />,
    mark: "w-[8px] bg-[#9d8cb5]",
    badge: (
      <div className="absolute top-[4px] left-[26px] flex size-[20px] items-center justify-center rounded-full bg-[#df9fe6] text-[13px] text-black">
        7
      </div>
    ),
  },
  { icon: <Photos />, mark: "w-[8px] bg-[#9d8cb5]" },
];

const Weather = () => (
  <svg viewBox="0 0 29 29" className="size-[29px]">
    <defs>
      <linearGradient id="moon" x1="0" y1="0" x2="0" y2="1">
        <stop offset="0" stopColor="#f6c445" />
        <stop offset="1" stopColor="#f07a1c" />
      </linearGradient>
    </defs>
    <path d="M20 1c11 5 11 19 2 25-6 4-16 2-19-6 12 2 20-5 17-19Z" fill="url(#moon)" />
    <path d="M4 11a4 4 0 0 1 .5-7.500A5 5 0 0 1 13 3a4 4 0 0 1 2 8Z" fill="#c3d4f5" />
  </svg>
);

const Jellyfish = () => (
  <svg viewBox="0 0 64 32" className="h-[32px] w-[64px]" fill="none">
    <path d="M13 26c-3 4-5 3-7 5M17 24c1 4-2 5 0 7M22 24c2 3 6 4 7 7M25 21c4 3 6 5 11 4M12 24c-3 1-4 2-6 1" stroke="#43c6c4" strokeWidth="1.300" />
    <circle cx="19" cy="14" r="12.500" fill="#7bd9dc" />
    <circle cx="19" cy="14" r="10" fill="#a9b2f3" />
    <path
      d="M19 5v6M12 8l4 4M26 8l-4 4M10 14h5M28 14h-5M12 20l4-4M26 20l-4-4"
      stroke="#5a6fd0"
      strokeWidth="2"
      strokeLinecap="round"
    />
    <path d="M39 17a8.500 7.500 0 0 1 16-2l-5 3-5-1Z" fill="#5fe0d2" />
    <path d="M42 17c2 4-4 8-1 13M47 17c-2 5 3 8-2 13M51 17c0 5 5 7 3 12M53 16c2 4 4 4 5 8" stroke="#55b9e6" strokeWidth="1.300" />
    <circle cx="2" cy="16" r="1.800" fill="#9ad8ef" />
    <circle cx="60" cy="13" r="1.800" fill="#9ad8ef" />
    <circle cx="51" cy="3" r="1.200" fill="#9ad8ef" />
    <circle cx="57" cy="18" r="1.200" fill="#9ad8ef" />
  </svg>
);

const Taskbar = () => (
  <footer className="flex h-[60px] items-center border-t border-[#3a3b42] bg-[linear-gradient(to_right,#1b2423_0%,#1b2424_26%,#152a2c_32%,#12264a_39%,#221f41_42%,#2b1f48_54%,#2d1850_60%,#2a1064_64%,#310f5b_71%,#2c1645_80%,#241b36_100%)] font-['Open_Sans',sans-serif] text-white">
    <div className="ml-[24px] flex w-[423px] items-center">
      <Weather />
      <div className="ml-[11px] text-[14.500px] leading-[20px] tracking-[-0.050px]">
        <div className="tracking-[-0.400px]">27°C</div>
        <div className="text-[#c6cac9]">Mostly clear</div>
      </div>
    </div>
    <div className="grid size-[29px] grid-cols-2 gap-px">
      <div className="bg-[#6fd0f8]" />
      <div className="bg-[#4cc3fb]" />
      <div className="bg-[#35b9fb]" />
      <div className="bg-[#129dfb]" />
    </div>
    <div className="ml-[17px] flex h-[40px] w-[275px] items-center rounded-full border border-white/20 bg-white/15 pl-[14px]">
      <Line className="size-[19px] text-[#e5e8ea]" box="0 0 19 19" width={2.2}>
        <circle cx="8" cy="8" r="6.700" />
        <path d="m13 13 5 5" />
      </Line>
      <span className="ml-[12px] text-[17px] tracking-[-0.400px] text-[#d5d9dc]">Search</span>
      <div className="mr-[4px] ml-auto">
        <Jellyfish />
      </div>
    </div>
    <div className="ml-[2px] flex">
      {apps.map((a, i) => (
        <div key={i} className="flex w-[55px] justify-center">
          <div className={"relative flex h-[50px] w-[50px] items-center justify-center " + (a.cell ?? "")}>
            {a.icon}
            {a.badge}
            {a.mark && (
              <div className="absolute inset-x-0 bottom-0 flex justify-center">
                <div className={"h-[4px] rounded-full " + a.mark} />
              </div>
            )}
          </div>
        </div>
      ))}
    </div>
    <div className="ml-auto flex items-center">
      <Line className="h-[9px] w-[14px]" box="0 0 14 9" width={2}>
        <path d="m1 8 6-6 6 6" />
      </Line>
      <svg viewBox="0 0 21 18" className="ml-[22px] h-[18px] w-[21px]">
        <path d="M4 13a4 4 0 0 1 0-7.500A6 6 0 0 1 15 4l1 6-8 3Z" fill="#b9b6be" />
        <circle cx="14.500" cy="11.500" r="6" fill="#d61f2f" />
        <path d="m12.300 9.300 4.400 4.400m0-4.400-4.400 4.400" stroke="#fff" strokeWidth="1.300" />
      </svg>
      <Line className="ml-[22px] h-[21px] w-[15px] text-[#dca5e2]" box="0 0 15 21" width={1.5}>
        <rect x="4.500" y="1" width="6" height="12" rx="3" />
        <path d="M1 9c0 9 13 9 13 0M7.500 16v5" />
      </Line>
      <div className="ml-[25px] w-[30px] text-center text-[14.500px] leading-[20px] tracking-[-0.200px]">
        <div>ENG</div>
        <div>IN</div>
      </div>
      <Line className="ml-[22px] h-[17px] w-[20px]" box="0 0 20 17" width={1.700}>
        <path d="M1 7a12.500 12.500 0 0 1 18 0" opacity=".35" />
        <path d="M4 10a8.500 8.500 0 0 1 12 0M7 13a4.500 4.500 0 0 1 6 0" />
        <circle cx="10" cy="15" r="1" fill="currentColor" />
      </Line>
      <Line className="ml-[10px] h-[18px] w-[21px]" box="0 0 21 18" width={1.500}>
        <path d="M1 6.500h3L9 2v14l-5-4.500H1ZM12 6a4.500 4.500 0 0 1 0 6M14.500 3.500a8 8 0 0 1 0 11M17 1.500a11 11 0 0 1 0 15" />
      </Line>
      <Line className="ml-[10px] h-[14px] w-[20px]" box="0 0 20 14" width={1.700}>
        <rect x="1" y="1" width="16" height="12" rx="2.500" />
        <path d="M19 5v4" strokeWidth="2" />
        <path d="M3.500 3.500h4v7h-4z" fill="currentColor" stroke="none" />
      </Line>
      <div className="ml-[18px] w-[79px] text-right text-[14.500px] leading-[20px] whitespace-nowrap">
        <div className="tracking-[-0.200px]">23:40</div>
        <div className="tracking-[0.120px]">24-04-2023</div>
      </div>
      <div className="mr-[25px] ml-[9px] flex size-[20px] items-center justify-center rounded-full bg-[#dd9ee5] text-[12px] text-[#2a2030]">
        7
      </div>
    </div>
  </footer>
);

export default function App() {
  return (
    <div className="flex h-[1080px] w-[1920px] flex-col overflow-hidden bg-white font-['Roboto',sans-serif]">
      <TabStrip />
      <AddressBar />
      <AppHeader />
      <ToolBar />
      <div className="flex h-[820px]">
        <SideRail />
        <div className="w-[1860px]">
          <Story />
          <Player />
        </div>
      </div>
      <Taskbar />
    </div>
  );
}
